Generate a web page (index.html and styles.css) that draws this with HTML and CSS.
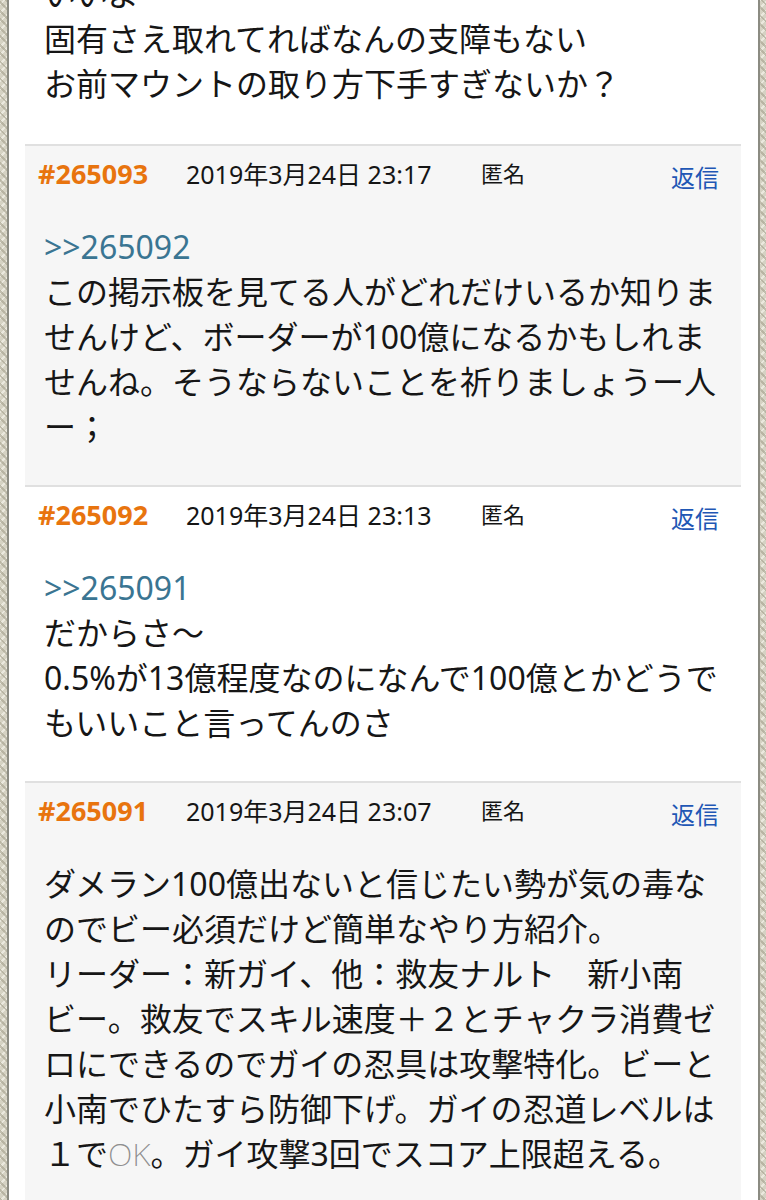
FILE: index.html
```html
<!DOCTYPE html>
<html lang="ja">
<head>
<meta charset="utf-8">
<title>掲示板</title>
<link rel="stylesheet" href="styles.css">
</head>
<body>
<div class="page">
  <div class="post odd first">
    <div class="body">いいよ<br>固有さえ取れてればなんの支障もない<br>お前マウントの取り方下手すぎないか？</div>
  </div>
  <div class="post even">
    <div class="head"><span class="no">#265093</span><span class="date">2019年3月24日 23:17</span><span class="name">匿名</span><a class="reply">返信</a></div>
    <div class="body"><a class="anchor">&gt;&gt;265092</a><br>この掲示板を見てる人がどれだけいるか知りま<br>せんけど、ボーダーが100億になるかもしれま<br>せんね。そうならないことを祈りましょうー人<br>ー；</div>
  </div>
  <div class="post odd">
    <div class="head"><span class="no">#265092</span><span class="date">2019年3月24日 23:13</span><span class="name">匿名</span><a class="reply">返信</a></div>
    <div class="body"><a class="anchor">&gt;&gt;265091</a><br>だからさ～<br>0.5%が13億程度なのになんで100億とかどうで<br>もいいこと言ってんのさ</div>
  </div>
  <div class="post even">
    <div class="head"><span class="no">#265091</span><span class="date">2019年3月24日 23:07</span><span class="name">匿名</span><a class="reply">返信</a></div>
    <div class="body">ダメラン100億出ないと信じたい勢が気の毒な<br>のでビー必須だけど簡単なやり方紹介。<br>リーダー：新ガイ、他：救友ナルト　新小南<br>ビー。救友でスキル速度＋２とチャクラ消費ゼ<br>ロにできるのでガイの忍具は攻撃特化。ビーと<br>小南でひたすら防御下げ。ガイの忍道レベルは<br>１で<span class="thin">OK</span>。ガイ攻撃3回でスコア上限超える。</div>
  </div>
</div>
</body>
</html>
```
FILE: styles.css
```css
html, body {
  margin: 0;
  padding: 0;
}
body {
  height: 1200px;
  overflow: hidden;
  background-color: #d5d2c3;
  background-image:
    repeating-linear-gradient(45deg, rgba(160,156,136,0.55) 0 2px, transparent 2px 6px),
    repeating-linear-gradient(-45deg, rgba(240,238,228,0.8) 0 2px, transparent 2px 6px);
  font-family: "Noto Sans", "Noto Sans CJK JP", sans-serif;
  color: #161616;
}
.page {
  margin: 0 6px 0 7px;
  border-left: 2px solid #8b8b82;
  border-right: 2px solid #8b8b82;
  background: #ffffff;
  min-height: 1300px;
  padding: 0 17px 0 16px;
  overflow: hidden;
}
.post {
  border-top: 2px solid #e0e0e0;
}
.post.first {
  border-top: none;
  margin-top: -29px;
}
.even {
  background: #f6f6f6;
}
.odd {
  background: #ffffff;
}
.head {
  display: flex;
  align-items: flex-start;
  height: 34px;
  padding: 11px 22px 0 13px;
}
.head > * {
  line-height: 34px;
}
.no {
  width: 148px;
  flex: none;
  color: #e8740e;
  font-weight: bold;
  font-size: 27px;
}
.date {
  width: 295px;
  flex: none;
  font-size: 25px;
  color: #151515;
}
.name {
  font-size: 22px;
  color: #151515;
  margin-top: -1px;
}
.reply {
  margin-left: auto;
  font-size: 24px;
  color: #1f57b5;
  padding-top: 4px;
}
.body {
  padding: 33px 0 36px 19px;
  font-size: 32px;
  line-height: 45px;
  white-space: nowrap;
}
.first .body {
  padding-top: 0;
  padding-bottom: 38px;
}
.anchor {
  color: #3a7592;
}
.thin {
  color: #8e8e8e;
  font-weight: 200;
}
```
